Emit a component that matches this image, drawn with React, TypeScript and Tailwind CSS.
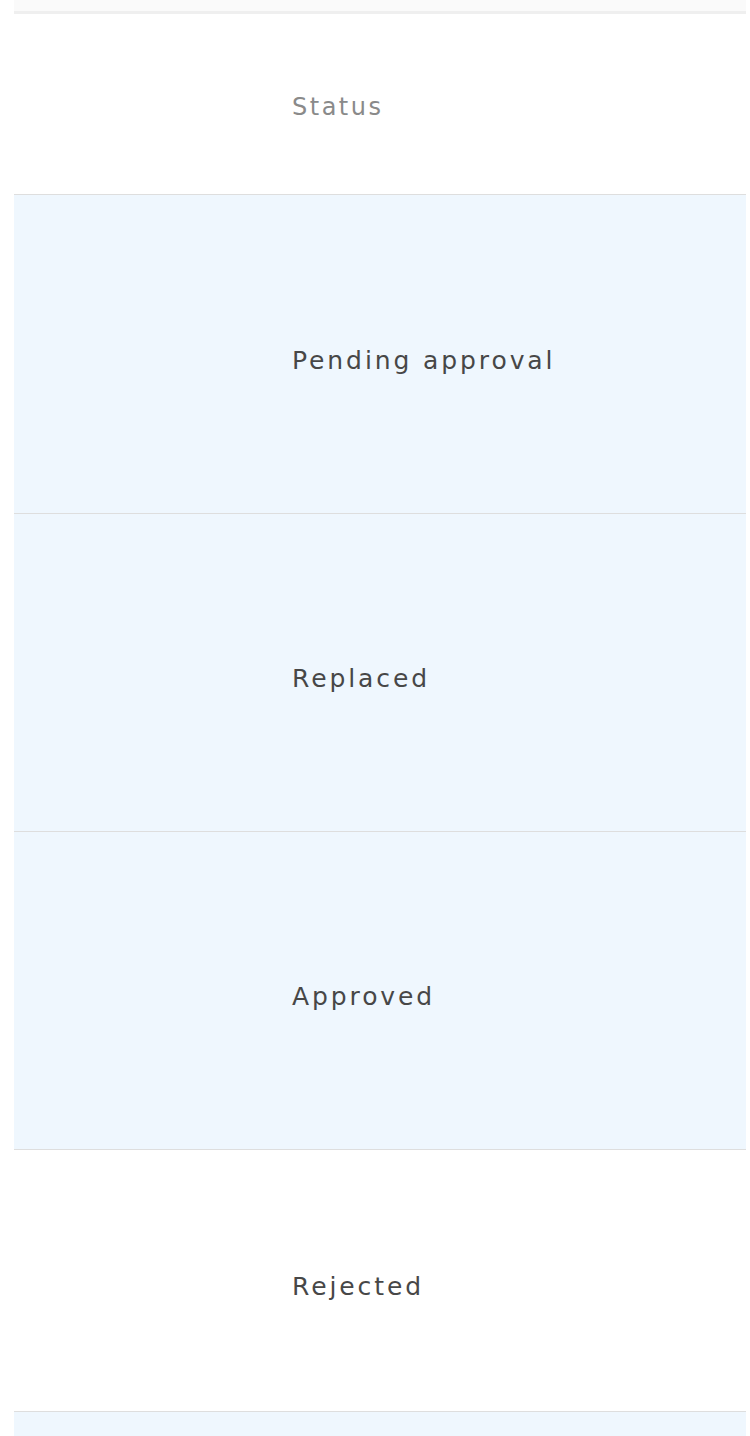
import React from "react";

const rows = [
  { label: "Pending approval", h: "h-[319px]", bg: "bg-[#eff7fe]" },
  { label: "Replaced", h: "h-[318px]", bg: "bg-[#eff7fe]" },
  { label: "Approved", h: "h-[318px]", bg: "bg-[#eff7fe]" },
  { label: "Rejected", h: "h-[262px]", bg: "bg-white" },
];

export default function App() {
  return (
    <div
      className="w-[750px] h-[1436px] overflow-hidden bg-white"
      style={{ fontFamily: '"DejaVu Sans", "Liberation Sans", sans-serif' }}
    >
      <div className="ml-[14px] w-[732px]">
        <div className="h-[14px] bg-[#fafafa] border-b-[3px] border-[#efefef]" />
        <div className="h-[181px] flex items-center pl-[278px] pt-[5px] border-b border-[#dedede] bg-white">
          <span className="text-[24px] text-[#8a8a8a] tracking-[2.5px]">Status</span>
        </div>
        {rows.map((r) => (
          <div
            key={r.label}
            className={`${r.h} ${r.bg} flex items-center pl-[278px] pt-[13px] border-b border-[#dedede]`}
          >
            <span className="text-[25px] text-[#474747] tracking-[2.9px]">{r.label}</span>
          </div>
        ))}
        <div className="h-[40px] bg-[#eff7fe]" />
      </div>
    </div>
  );
}
